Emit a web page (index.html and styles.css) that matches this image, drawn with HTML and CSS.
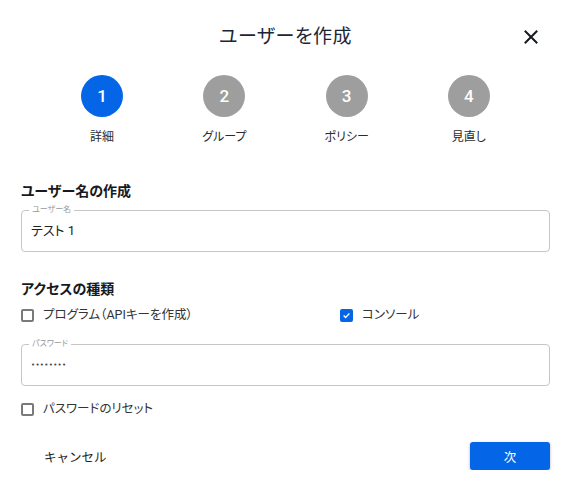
FILE: index.html
```html
<!DOCTYPE html>
<html lang="ja">
<head>
<meta charset="utf-8">
<link rel="stylesheet" href="styles.css">
</head>
<body>
<div class="dialog">
  <header class="header">
    <h1 class="title">ユーザーを作成</h1>
    <button class="close" aria-label="閉じる">
      <svg width="14" height="14" viewBox="0 0 14 14"><path d="M1.5 1.5 L12.5 12.5 M12.5 1.5 L1.5 12.5" stroke="#16191f" stroke-width="2" fill="none" stroke-linecap="square"/></svg>
    </button>
  </header>

  <ol class="stepper">
    <li class="step active"><span class="circle">1</span><span class="step-label">詳細</span></li>
    <li class="step"><span class="circle">2</span><span class="step-label">グループ</span></li>
    <li class="step"><span class="circle">3</span><span class="step-label">ポリシー</span></li>
    <li class="step"><span class="circle">4</span><span class="step-label">見直し</span></li>
  </ol>

  <section class="section">
    <h2 class="section-title">ユーザー名の作成</h2>
    <fieldset class="field">
      <legend class="field-label">ユーザー名</legend>
      <div class="field-value">テスト 1</div>
    </fieldset>
  </section>

  <section class="section access">
    <h2 class="section-title">アクセスの種類</h2>
    <div class="check-row">
      <label class="check"><span class="box"></span><span class="text">プログラム（APIキーを作成）</span></label>
      <label class="check"><span class="box checked"><svg width="11" height="11" viewBox="0 0 11 11"><path d="M2 5.6 L4.4 8 L9 3" stroke="#fff" stroke-width="1.6" fill="none"/></svg></span><span class="text">コンソール</span></label>
    </div>
    <fieldset class="field pw">
      <legend class="field-label">パスワード</legend>
      <div class="field-value dots">••••••••</div>
    </fieldset>
    <label class="check reset"><span class="box"></span><span class="text">パスワードのリセット</span></label>
  </section>

  <footer class="footer">
    <button class="btn-cancel">キャンセル</button>
    <button class="btn-next">次</button>
  </footer>
</div>
</body>
</html>
```
FILE: styles.css
```css
* { box-sizing: border-box; }
html, body { margin: 0; padding: 0; background: #fff; }
body {
  font-family: Roboto, "Noto Sans CJK JP", sans-serif;
  color: #16191f;
  font-feature-settings: "palt";
}
.dialog { width: 571px; padding: 0 21px; }
.header {
  height: 74px;
  position: relative;
  display: flex;
  align-items: center;
  justify-content: center;
}
.title {
  margin: 0;
  font-size: 19px;
  font-weight: 400;
  line-height: 24px;
  color: #1b2536;
  letter-spacing: 0.5px;
}
.close {
  position: absolute;
  right: 12px;
  top: 30px;
  width: 14px;
  height: 14px;
  padding: 0;
  border: 0;
  background: none;
  display: flex;
}
.stepper {
  list-style: none;
  margin: 1px 0 0;
  padding: 0 20px;
  display: grid;
  grid-template-columns: repeat(4, 1fr);
}
.step { display: flex; flex-direction: column; align-items: center; }
.circle {
  width: 42px;
  height: 42px;
  border-radius: 50%;
  background: #9e9e9e;
  color: #fff;
  font-size: 17px;
  font-weight: 500;
  display: flex;
  align-items: center;
  justify-content: center;
}
.step.active .circle { background: #0466e6; }
.step-label {
  margin-top: 12px;
  font-size: 12px;
  line-height: 16px;
  color: #2b2b2b;
}
.section { margin-top: 36px; }
.section.access { margin-top: 27px; }
.section-title {
  margin: 0 0 4px;
  font-size: 14px;
  font-weight: 700;
  line-height: 20px;
  color: #16191f;
}
.access .section-title { margin-bottom: 6px; }
.field {
  margin: 0;
  padding: 0 9px 12px;
  border: 1px solid #c6c6c6;
  border-radius: 4px;
  min-width: 0;
}
.field-label {
  padding: 0 3px;
  margin-left: -2px;
  font-size: 8px;
  line-height: 10px;
  color: #9a9a9a;
}
.field-value {
  margin-top: 8px;
  font-size: 13px;
  line-height: 16px;
  color: #222;
}
.dots { font-size: 7px; letter-spacing: 0.3px; color: #444; font-family: "DejaVu Sans", sans-serif; }
.pw { margin-top: 14px; }
.check-row { display: flex; height: 20px; align-items: center; }
.check {
  display: flex;
  align-items: center;
  gap: 9px;
  font-size: 12.5px;
  line-height: 20px;
  color: #333;
}
.text { white-space: nowrap; }
.check-row .check:first-child { width: 319px; flex: none; }
.box {
  width: 13px;
  height: 13px;
  border: 2px solid #7a7a7a;
  border-radius: 2px;
  display: flex;
  align-items: center;
  justify-content: center;
  flex: none;
}
.box.checked { background: #0466e6; border-color: #0466e6; }
.reset { margin-top: 13px; }
.footer {
  margin-top: 23px;
  display: flex;
  justify-content: space-between;
  align-items: center;
}
.btn-cancel {
  margin-left: 2px;
  padding: 0 21px;
  height: 28px;
  border: 0;
  background: none;
  font-family: inherit;
  font-size: 12.5px;
  color: #222;
}
.btn-next {
  width: 80px;
  height: 28px;
  border: 0;
  border-radius: 3px;
  background: #0466e6;
  color: #fff;
  font-family: inherit;
  font-size: 12.5px;
  box-shadow: 0 1px 3px rgba(0,0,0,0.3);
}
```
